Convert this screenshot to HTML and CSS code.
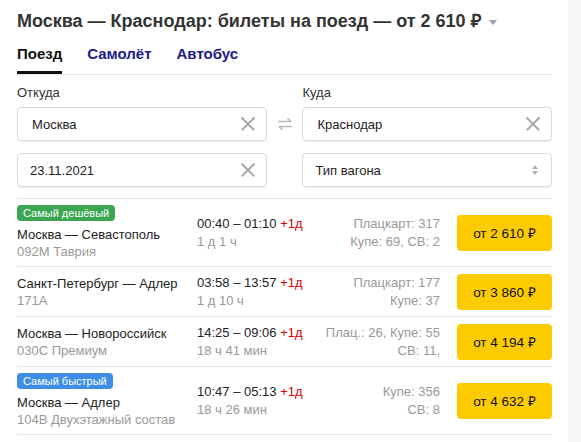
FILE: index.html
```html
<!DOCTYPE html>
<html lang="ru">
<head>
<meta charset="utf-8">
<title>Москва — Краснодар</title>
<link rel="stylesheet" href="styles.css">
</head>
<body>
<div class="page">
  <main class="main">
    <h1 class="title">Москва — Краснодар: билеты на поезд — от 2 610 ₽ <span class="title-caret"></span></h1>
    <nav class="tabs">
      <span class="tab tab-active">Поезд</span>
      <span class="tab">Самолёт</span>
      <span class="tab">Автобус</span>
    </nav>
    <section class="form">
      <div class="form-col">
        <div class="label">Откуда</div>
        <div class="field"><span class="field-text">Москва</span><span class="clear"></span></div>
        <div class="field field-date"><span class="field-text">23.11.2021</span><span class="clear"></span></div>
      </div>
      <div class="swap">
        <svg width="16" height="14" viewBox="0 0 16 14"><path d="M1 4.5h13M10.5 1.5l3.5 3M15 9.5H2M5.5 12.5L2 9.5" stroke="#b8b8b8" stroke-width="1.6" fill="none"/></svg>
      </div>
      <div class="form-col">
        <div class="label">Куда</div>
        <div class="field"><span class="field-text">Краснодар</span><span class="clear"></span></div>
        <div class="field field-select"><span class="field-text">Тип вагона</span><span class="spinner"></span></div>
      </div>
    </section>
    <section class="list">
      <div class="row">
        <div class="route">
          <div class="badge badge-green">Самый дешёвый</div>
          <div class="route-name">Москва — Севастополь</div>
          <div class="sub">092M Таврия</div>
        </div>
        <div class="time">
          <div>00:40 – 01:10 <span class="plus">+1д</span></div>
          <div class="sub">1 д 1 ч</div>
        </div>
        <div class="seats"><div>Плацкарт: 317</div><div>Купе: 69, СВ: 2</div></div>
        <div class="price">от 2 610 ₽</div>
      </div>
      <div class="row">
        <div class="route">
          <div class="route-name">Санкт-Петербург — Адлер</div>
          <div class="sub">171А</div>
        </div>
        <div class="time">
          <div>03:58 – 13:57 <span class="plus">+1д</span></div>
          <div class="sub">1 д 10 ч</div>
        </div>
        <div class="seats"><div>Плацкарт: 177</div><div>Купе: 37</div></div>
        <div class="price">от 3 860 ₽</div>
      </div>
      <div class="row">
        <div class="route">
          <div class="route-name">Москва — Новороссийск</div>
          <div class="sub">030С Премиум</div>
        </div>
        <div class="time">
          <div>14:25 – 09:06 <span class="plus">+1д</span></div>
          <div class="sub">18 ч 41 мин</div>
        </div>
        <div class="seats"><div>Плац.: 26, Купе: 55</div><div>СВ: 11,</div></div>
        <div class="price">от 4 194 ₽</div>
      </div>
      <div class="row">
        <div class="route">
          <div class="badge badge-blue">Самый быстрый</div>
          <div class="route-name">Москва — Адлер</div>
          <div class="sub">104В Двухэтажный состав</div>
        </div>
        <div class="time">
          <div>10:47 – 05:13 <span class="plus">+1д</span></div>
          <div class="sub">18 ч 26 мин</div>
        </div>
        <div class="seats"><div>Купе: 356</div><div>СВ: 8</div></div>
        <div class="price">от 4 632 ₽</div>
      </div>
    </section>
  </main>
  <aside class="strip"></aside>
</div>
</body>
</html>
```
FILE: styles.css
```css
html, body {
  margin: 0;
  padding: 0;
  background: #fff;
}
body {
  font-family: "Liberation Sans", Arial, sans-serif;
  color: #222;
  font-size: 13px;
}
.page {
  display: flex;
  height: 442px;
  overflow: hidden;
}
.main {
  width: 535px;
  padding: 0 16px 0 17px;
}
.strip {
  flex: 1;
  background: #f7f7f7;
}
.title {
  margin: 0;
  padding-top: 10px;
  font-size: 18px;
  line-height: 22px;
  font-weight: bold;
  color: #333;
  white-space: nowrap;
}
.title-caret {
  display: inline-block;
  width: 0;
  height: 0;
  border-left: 4px solid transparent;
  border-right: 4px solid transparent;
  border-top: 5px solid #a0a0a0;
  margin-left: 3px;
  vertical-align: 2px;
}
.tabs {
  display: flex;
  gap: 25px;
  margin-top: 13px;
  border-bottom: 1px solid #e6e6e6;
}
.tab {
  font-size: 15px;
  font-weight: bold;
  color: #1c1a8a;
  line-height: 18px;
  padding-bottom: 11px;
}
.tab-active {
  color: #111;
  box-shadow: inset 0 -3px 0 #111;
}
.form {
  display: flex;
  align-items: flex-start;
  padding-top: 10px;
  padding-bottom: 11px;
  border-bottom: 1px solid #e6e6e6;
}
.form-col {
  width: 250px;
}
.label {
  font-size: 13px;
  color: #333;
  line-height: 16px;
  margin-bottom: 6px;
}
.field {
  box-sizing: border-box;
  height: 34px;
  border: 1px solid #d9d9d9;
  border-radius: 4px;
  box-shadow: 0 1px 1px rgba(0,0,0,0.06);
  display: flex;
  align-items: center;
  justify-content: space-between;
  padding: 0 10px 0 14px;
  font-size: 13px;
  color: #222;
}
.field + .field {
  margin-top: 12px;
}
.field-date {
  padding-left: 12px;
}
.field-select {
  padding-left: 12px;
  padding-right: 13px;
}
.clear {
  position: relative;
  width: 16px;
  height: 16px;
}
.clear::before,
.clear::after {
  content: "";
  position: absolute;
  left: -1px;
  top: 7px;
  width: 18px;
  height: 1.5px;
  background: #a8a8a8;
  transform: rotate(45deg);
}
.clear::after {
  transform: rotate(-45deg);
}
.spinner {
  display: flex;
  flex-direction: column;
  gap: 2px;
}
.spinner::before,
.spinner::after {
  content: "";
  width: 0;
  height: 0;
  border-left: 3px solid transparent;
  border-right: 3px solid transparent;
}
.spinner::before {
  border-bottom: 4px solid #b0b0b0;
}
.spinner::after {
  border-top: 4px solid #b0b0b0;
}
.swap {
  width: 36px;
  display: flex;
  justify-content: center;
  padding-top: 32px;
}
.list {
  display: flex;
  flex-direction: column;
}
.row {
  box-sizing: border-box;
  min-height: 50px;
  display: flex;
  align-items: center;
  padding: 6px 0;
  border-bottom: 1px solid #e6e6e6;
}
.route {
  width: 180px;
  line-height: 17px;
}
.route-name {
  color: #222;
}
.sub {
  color: #999;
}
.badge {
  width: fit-content;
  color: #fff;
  font-size: 11px;
  line-height: 16px;
  padding: 0 6px;
  border-radius: 4px;
  margin-bottom: 5px;
}
.badge-green {
  background: #3aa651;
}
.badge-blue {
  background: #3e8ee5;
}
.time {
  width: 128px;
  line-height: 18px;
}
.plus {
  color: #d10000;
}
.seats {
  width: 115px;
  text-align: right;
  color: #999;
  line-height: 18px;
  white-space: nowrap;
}
.price {
  margin-left: auto;
  width: 95px;
  height: 36px;
  background: #fdcc00;
  border-radius: 4px;
  display: flex;
  align-items: center;
  justify-content: center;
  color: #111;
  font-size: 13.5px;
}
```
